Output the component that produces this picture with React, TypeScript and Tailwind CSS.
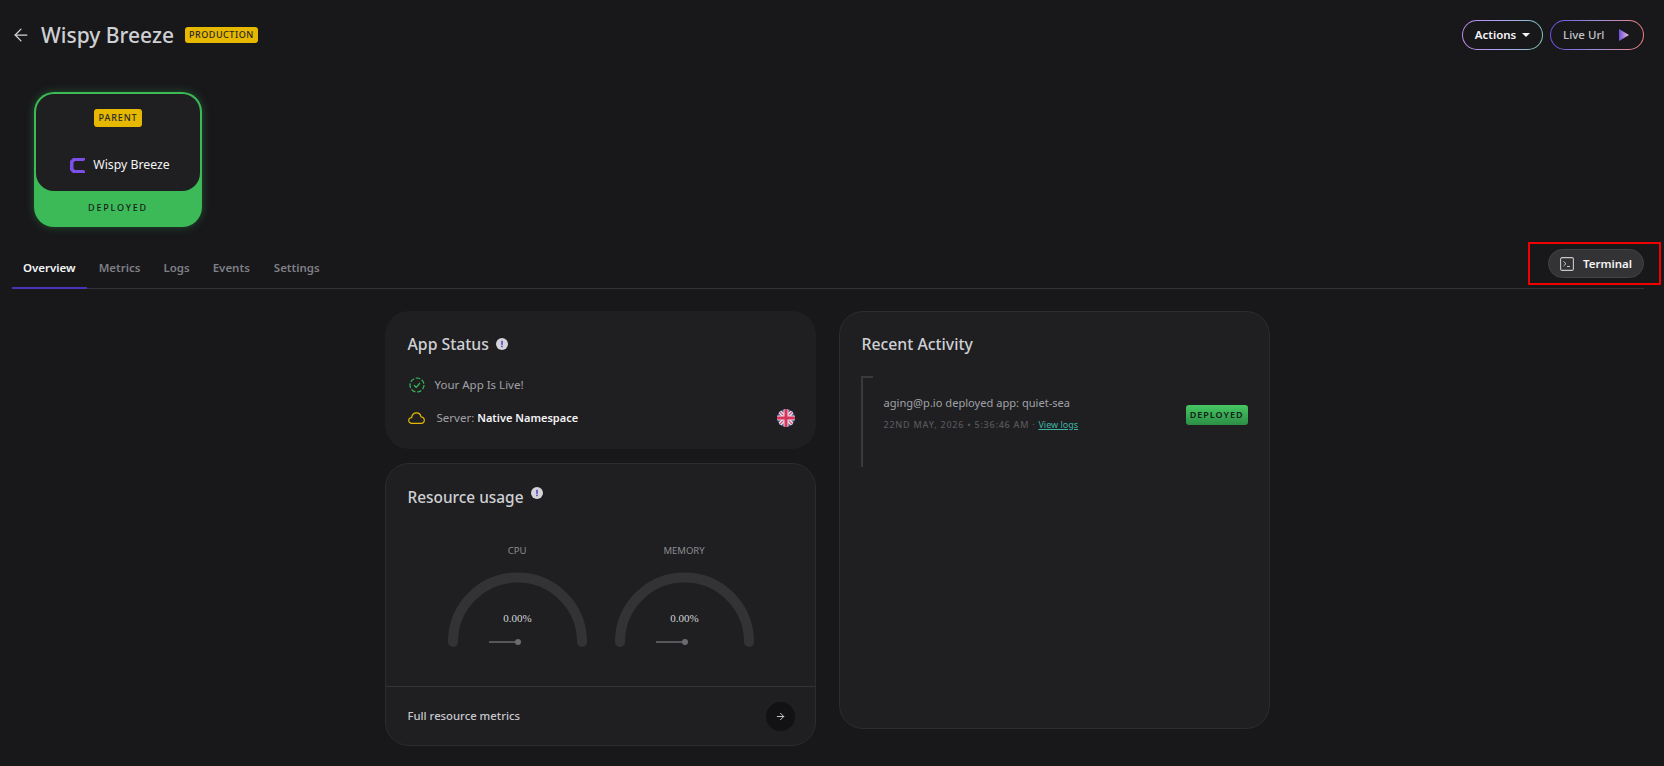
import React from "react";
import { ArrowLeft, ArrowRight } from "lucide-react";

const font = "font-['Noto_Sans','Liberation_Sans',sans-serif]";

function Info() {
  return (
    <svg width="12" height="12" viewBox="0 0 12 12" className="shrink-0">
      <circle cx="6" cy="6" r="6" fill="#d4d4d8" />
      <rect x="5.2" y="2.8" width="1.6" height="4" fill="#5b3fd6" />
      <rect x="5.2" y="7.6" width="1.6" height="1.6" fill="#5b3fd6" />
    </svg>
  );
}

function Gauge({ label }: { label: string }) {
  return (
    <div className="flex w-[139px] flex-col items-center">
      <div className="text-[9.5px] leading-[14px] text-[#8b8b90]">{label}</div>
      <svg width="139" height="76" viewBox="0 0 139 76" className="mt-[14px]">
        <path d="M5 70 A64.5 64.5 0 0 1 134 70" fill="none" stroke="#333336" strokeWidth="10" strokeLinecap="round" />
        <text x="69.5" y="50" textAnchor="middle" fontSize="11" fill="#d4d4d8" fontFamily="'Liberation Serif', serif">0.00%</text>
        <line x1="41" y1="70" x2="70" y2="70" stroke="#6b6b6f" strokeWidth="1.5" />
        <circle cx="70" cy="70" r="3" fill="#6b6b6f" />
      </svg>
    </div>
  );
}

function Flag() {
  return (
    <svg width="18" height="18" viewBox="0 0 18 18" className="shrink-0">
      <defs>
        <clipPath id="flagclip"><circle cx="9" cy="9" r="9" /></clipPath>
      </defs>
      <g clipPath="url(#flagclip)">
        <rect width="18" height="18" fill="#4a4a86" />
        <path d="M0 0L18 18M18 0L0 18" stroke="#e4dfe8" strokeWidth="4" />
        <path d="M0 0L18 18M18 0L0 18" stroke="#d8476a" strokeWidth="1.2" />
        <path d="M9 0V18M0 9H18" stroke="#e4dfe8" strokeWidth="5" />
        <path d="M9 0V18M0 9H18" stroke="#d8345a" strokeWidth="3" />
      </g>
    </svg>
  );
}

export default function App() {
  return (
    <div className={`${font} h-[766px] w-[1664px] overflow-hidden bg-[#18181b] pl-3 pr-5 text-[#d4d4d8]`}>
      <header className="flex h-[70px] items-center justify-between">
        <div className="flex items-center">
          <ArrowLeft size={20} strokeWidth={1.5} className="ml-[-1px] text-[#d4d4d8]" />
          <h1 className="ml-[10px] text-[21px] font-medium leading-[30px] text-[#cfd0d4]">Wispy Breeze</h1>
          <span className="ml-[11px] rounded-[3px] bg-[#e6b800] px-[4px] text-[9px] font-medium leading-[16px] tracking-[0.06em] text-[#27272a]">PRODUCTION</span>
        </div>
        <div className="flex items-center gap-[7px]">
          <div className="rounded-full bg-[linear-gradient(90deg,#c58be8,#a9a4f5,#7fc8b8)] p-px">
            <div className="flex h-[28px] w-[79px] items-center justify-center gap-[6px] rounded-full bg-[#18181b] text-[11.5px] font-semibold text-[#f4f4f5]">
              Actions
              <svg width="8" height="4" viewBox="0 0 8 4"><path d="M0 0H8L4 4Z" fill="#f4f4f5" /></svg>
            </div>
          </div>
          <div className="rounded-full bg-[linear-gradient(90deg,#6d4fe0,#a08fd8,#f08080)] p-px">
            <div className="flex h-[28px] w-[92px] items-center justify-between rounded-full bg-[#18181b] pl-[12px] pr-[14px] text-[11.5px] font-medium text-[#c4c4c8]">
              Live Url
              <svg width="10" height="12" viewBox="0 0 10 12">
                <defs>
                  <linearGradient id="play" x1="0" x2="1" y1="0" y2="0">
                    <stop offset="0" stopColor="#6d4fe0" />
                    <stop offset="1" stopColor="#f0c0d8" />
                  </linearGradient>
                </defs>
                <path d="M0 0L10 6L0 12Z" fill="url(#play)" />
              </svg>
            </div>
          </div>
        </div>
      </header>

      <div className="ml-[22px] mt-[22px] h-[135px] w-[168px] rounded-[20px] bg-[#3cba57] p-[2px] shadow-[0_0_8px_rgba(60,186,87,0.35)]">
        <div className="flex h-[97px] flex-col items-center rounded-[18px] bg-[#1f1f22] pt-[15px]">
          <span className="rounded-[3px] bg-[#e6b800] px-[4px] text-[9px] font-medium leading-[18px] tracking-[0.1em] text-[#27272a]">PARENT</span>
          <div className="mt-[30px] flex items-center gap-[8px] pl-[4px]">
            <svg width="15" height="15" viewBox="0 0 15 15">
              <path d="M3 0H15V2L13.5 3H5L3.5 4.5V10.5L5 12H13.5L15 13V15H3L0 12V3Z" fill="#7c4fe8" />
            </svg>
            <span className="text-[12.3px] leading-[16px] text-[#f4f4f5]">Wispy Breeze</span>
          </div>
        </div>
        <div className="pt-[10px] text-center text-[9px] font-medium leading-[14px] tracking-[0.2em] text-[#1a1a1c]">DEPLOYED</div>
      </div>

      <div className="relative mt-[21px] flex h-[41px] items-start justify-between border-b border-[#333336]">
        <nav className="flex items-start text-[11.5px] font-semibold leading-[16px] text-[#7f7f85]">
          <div className="h-[41px] border-b-2 border-[#4b32b8] px-[11px] pt-[12px] text-[#f4f4f5]">Overview</div>
          <div className="ml-[12px] pt-[12px]">Metrics</div>
          <div className="ml-[23px] pt-[12px]">Logs</div>
          <div className="ml-[23px] pt-[12px]">Events</div>
          <div className="ml-[24px] pt-[12px]">Settings</div>
        </nav>
        <div className="mt-[1px] flex h-[29px] w-[96px] items-center justify-center gap-[9px] rounded-full border border-[#434347] bg-[#333336] text-[11.5px] font-semibold text-[#f4f4f5]">
          <svg width="14" height="14" viewBox="0 0 14 14" fill="none" stroke="#c8c8cc">
            <rect x="0.6" y="0.6" width="12.8" height="12.8" rx="1.5" strokeWidth="1.1" />
            <path d="M3.5 4.5L6 6.7L3.5 9M7 9.5H10" strokeWidth="1" />
          </svg>
          Terminal
        </div>
        <div className="absolute right-[-17px] top-[-6px] h-[43px] w-[133px] border-2 border-[#f00000]" />
      </div>

      <main className="ml-[-2px] mt-[22px] flex items-start justify-center gap-[23px]">
        <div className="flex w-[431px] flex-col gap-[14px]">
          <section className="h-[138px] rounded-[24px] bg-[#1f1f22] pl-[23px] pr-[21px] pt-[22px]">
            <div className="flex items-center gap-[7px]">
              <h2 className="text-[15.8px] font-medium leading-[22px] text-[#cfd0d4]">App Status</h2>
              <Info />
            </div>
            <div className="mt-[21px] flex items-center gap-[10px] pl-[1px] text-[11.5px] leading-[18px] text-[#a1a1a6]">
              <svg width="16" height="16" viewBox="0 0 16 16" fill="none" stroke="#3cba57" strokeWidth="1.2">
                <circle cx="8" cy="8" r="7" strokeDasharray="4.5 1.8" />
                <path d="M5 8.2L7.2 10.3L11 6" />
              </svg>
              Your App Is Live!
            </div>
            <div className="mt-[15px] flex items-center justify-between">
              <div className="flex items-center gap-[12px] text-[11.5px] leading-[18px] text-[#a1a1a6]">
                <svg width="17" height="12" viewBox="0 0 17 12" fill="none" stroke="#e6b800" strokeWidth="1.2">
                  <path d="M4 11.3C2 11.3 0.7 10 0.7 8.4C0.7 6.8 2 5.6 3.6 5.6C4 3 6 0.8 8.6 0.8C11 0.8 12.6 2.6 13 4.8C14.9 5 16.3 6.5 16.3 8.2C16.3 10 15 11.3 13 11.3Z" />
                </svg>
                <span>Server: <span className="text-[11px] font-semibold text-[#f4f4f5]">Native Namespace</span></span>
              </div>
              <Flag />
            </div>
          </section>

          <section className="flex h-[283px] flex-col rounded-[24px] border border-[#2c2c30] bg-[#1f1f22]">
            <div className="flex items-start gap-[7px] px-[22px] pt-[23px]">
              <h2 className="text-[15.4px] font-medium leading-[22px] text-[#cfd0d4]">Resource usage</h2>
              <Info />
            </div>
            <div className="mt-[35px] flex justify-center gap-[28px] pl-[1px]">
              <Gauge label="CPU" />
              <Gauge label="MEMORY" />
            </div>
            <div className="mt-auto flex h-[59px] items-center justify-between border-t border-[#333336] pl-[22px] pr-[20px]">
              <span className="text-[11.3px] font-medium text-[#c8c8cc]">Full resource metrics</span>
              <div className="flex h-[29px] w-[29px] items-center justify-center rounded-full bg-[#121214]">
                <ArrowRight size={11} className="text-[#d4d4d8]" />
              </div>
            </div>
          </section>
        </div>

        <section className="h-[418px] w-[431px] rounded-[24px] border border-[#2c2c30] bg-[#1f1f22] pl-[22px] pr-[21px] pt-[21px]">
          <h2 className="text-[15.8px] font-medium leading-[22px] text-[#cfd0d4]">Recent Activity</h2>
          <div className="mt-[21px] flex h-[91px] items-start justify-between">
            <div className="ml-[-1px] h-full w-[12px] border-l-2 border-t-2 border-[#3a3a3d]" />
            <div className="ml-[11px] flex-1 pt-[18px]">
              <div className="text-[11.1px] leading-[18px] text-[#a1a1a6]">aging@p.io deployed app: quiet-sea</div>
              <div className="mt-[6px] flex items-center gap-[3px] text-[9px] leading-[14px] tracking-[0.085em] text-[#57575b]">
                <span className="font-medium">22ND MAY, 2026 • 5:36:46 AM</span>
                <span>·</span>
                <span className="text-[9px] tracking-normal text-[#3fb5a3] underline">View logs</span>
              </div>
            </div>
            <div className="mt-[29px] rounded-[3px] bg-[linear-gradient(180deg,#46c763,#2c8f45)] px-[4px] text-[9px] font-semibold leading-[20px] tracking-[0.11em] text-[#17201a]">DEPLOYED</div>
          </div>
        </section>
      </main>
    </div>
  );
}
